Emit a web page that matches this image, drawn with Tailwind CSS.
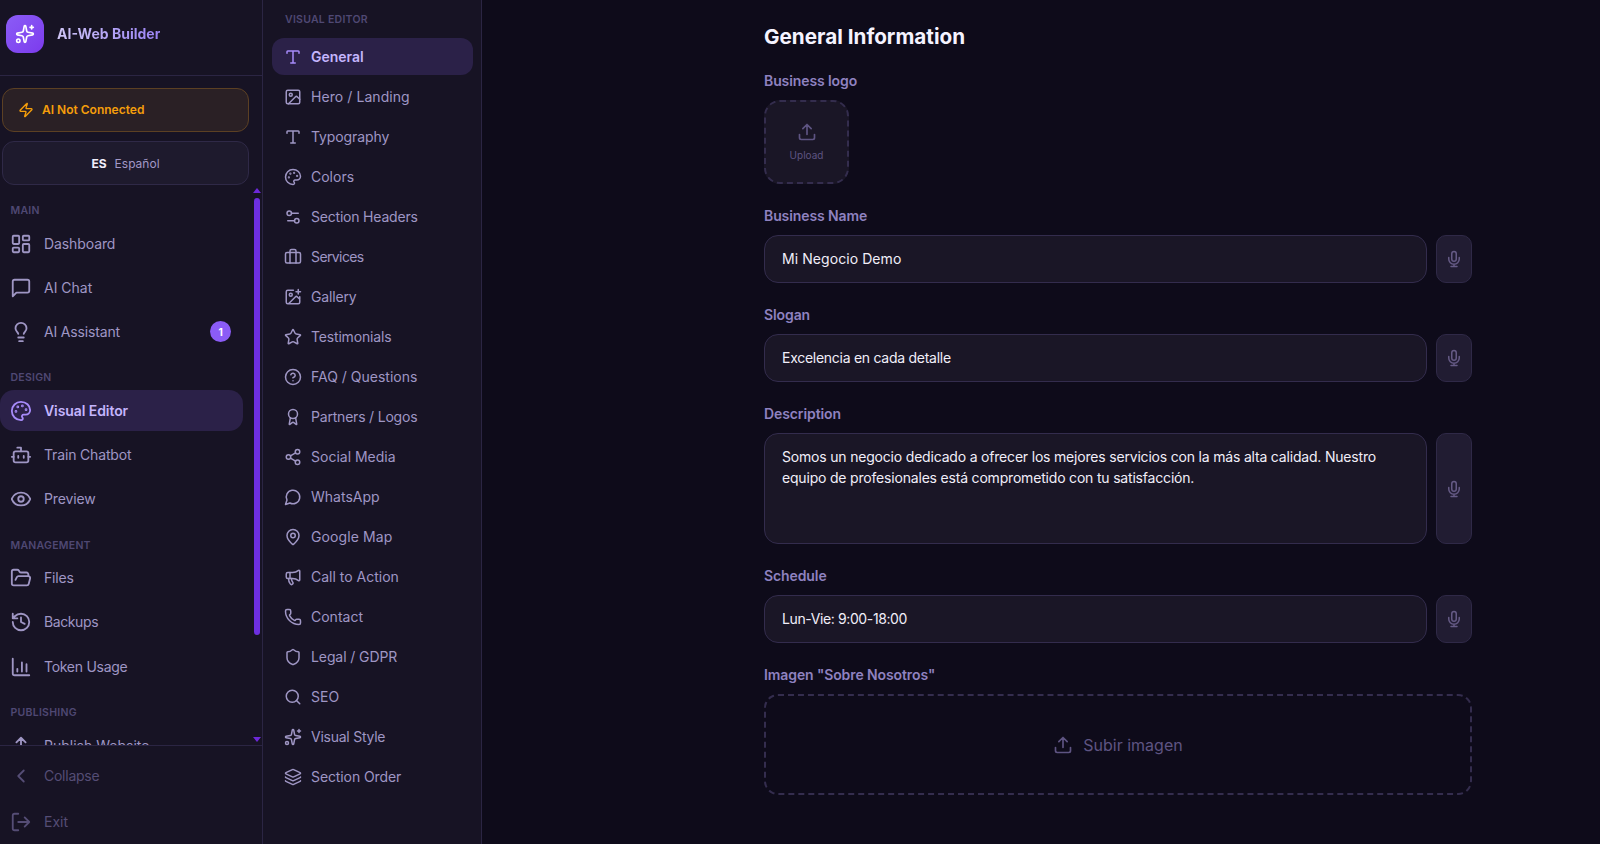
<!DOCTYPE html>
<html lang="en">
<head>
<meta charset="utf-8">
<title>AI-Web Builder</title>
<script src="https://cdn.jsdelivr.net/npm/@tailwindcss/browser@4"></script>
</head>
<body class="bg-[#0e0b1a]">
<svg class="hidden" xmlns="http://www.w3.org/2000/svg">
<symbol id="i-sparkles" viewBox="0 0 24 24"><path d="M11.017 2.814a1 1 0 0 1 1.966 0l1.051 5.558a2 2 0 0 0 1.594 1.594l5.558 1.051a1 1 0 0 1 0 1.966l-5.558 1.051a2 2 0 0 0-1.594 1.594l-1.051 5.558a1 1 0 0 1-1.966 0l-1.051-5.558a2 2 0 0 0-1.594-1.594l-5.558-1.051a1 1 0 0 1 0-1.966l5.558-1.051a2 2 0 0 0 1.594-1.594z"/><path d="M20 2v4M22 4h-4"/><circle cx="4" cy="20" r="2"/></symbol>
<symbol id="i-zap" viewBox="0 0 24 24"><path d="M4 14a1 1 0 0 1-.78-1.63l9.9-10.2a.5.5 0 0 1 .86.46l-1.92 6.02A1 1 0 0 0 13 10h7a1 1 0 0 1 .78 1.63l-9.9 10.2a.5.5 0 0 1-.86-.46l1.92-6.02A1 1 0 0 0 11 14z"/></symbol>
<symbol id="i-dash" viewBox="0 0 24 24"><rect x="3" y="3" width="7" height="9" rx="1"/><rect x="14" y="3" width="7" height="5" rx="1"/><rect x="14" y="12" width="7" height="9" rx="1"/><rect x="3" y="16" width="7" height="5" rx="1"/></symbol>
<symbol id="i-msq" viewBox="0 0 24 24"><path d="M21 15a2 2 0 0 1-2 2H7l-4 4V5a2 2 0 0 1 2-2h14a2 2 0 0 1 2 2z"/></symbol>
<symbol id="i-bulb" viewBox="0 0 24 24"><path d="M15 14c.2-1 .7-1.7 1.5-2.5 1-.9 1.5-2.2 1.5-3.5A6 6 0 0 0 6 8c0 1 .2 2.2 1.5 3.5.7.7 1.3 1.5 1.5 2.5M9 18h6M10 22h4"/></symbol>
<symbol id="i-palette" viewBox="0 0 24 24"><path d="M12 22a1 1 0 0 1 0-20 10 9 0 0 1 10 9 5 5 0 0 1-5 5h-2.25a1.75 1.75 0 0 0-1.4 2.8l.3.4a1.75 1.75 0 0 1-1.4 2.8z"/><circle cx="13.5" cy="6.5" r=".5" fill="currentColor"/><circle cx="17.5" cy="10.5" r=".5" fill="currentColor"/><circle cx="6.5" cy="12.5" r=".5" fill="currentColor"/><circle cx="8.5" cy="7.5" r=".5" fill="currentColor"/></symbol>
<symbol id="i-bot" viewBox="0 0 24 24"><path d="M12 8V4H8"/><rect x="4" y="8" width="16" height="12" rx="2"/><path d="M2 14h2M20 14h2M15 13v2M9 13v2"/></symbol>
<symbol id="i-eye" viewBox="0 0 24 24"><path d="M2.062 12.348a1 1 0 0 1 0-.696 10.75 10.75 0 0 1 19.876 0 1 1 0 0 1 0 .696 10.75 10.75 0 0 1-19.876 0"/><circle cx="12" cy="12" r="3"/></symbol>
<symbol id="i-folder" viewBox="0 0 24 24"><path d="m6 14 1.5-2.9A2 2 0 0 1 9.24 10H20a2 2 0 0 1 1.94 2.5l-1.54 6a2 2 0 0 1-1.95 1.5H4a2 2 0 0 1-2-2V5a2 2 0 0 1 2-2h3.9a2 2 0 0 1 1.69.9l.81 1.2a2 2 0 0 0 1.67.9H18a2 2 0 0 1 2 2v2"/></symbol>
<symbol id="i-history" viewBox="0 0 24 24"><path d="M3 12a9 9 0 1 0 9-9 9.75 9.75 0 0 0-6.74 2.74L3 8M3 3v5h5M12 7v5l4 2"/></symbol>
<symbol id="i-chart" viewBox="0 0 24 24"><path d="M3 3v16a2 2 0 0 0 2 2h16M8 17v-3M13 17V7M18 17V9"/></symbol>
<symbol id="i-upload" viewBox="0 0 24 24"><path d="M12 3v12M17 8l-5-5-5 5M21 15v4a2 2 0 0 1-2 2H5a2 2 0 0 1-2-2v-4"/></symbol>
<symbol id="i-left" viewBox="0 0 24 24"><path d="m15 18-6-6 6-6"/></symbol>
<symbol id="i-logout" viewBox="0 0 24 24"><path d="m16 17 5-5-5-5M21 12H9M9 21H5a2 2 0 0 1-2-2V5a2 2 0 0 1 2-2h4"/></symbol>
<symbol id="i-type" viewBox="0 0 24 24"><path d="M12 4v16M4 7V5a1 1 0 0 1 1-1h14a1 1 0 0 1 1 1v2M9 20h6"/></symbol>
<symbol id="i-image" viewBox="0 0 24 24"><rect x="3" y="3" width="18" height="18" rx="2"/><circle cx="9" cy="9" r="2"/><path d="m21 15-3.086-3.086a2 2 0 0 0-2.828 0L6 21"/></symbol>
<symbol id="i-sliders" viewBox="0 0 24 24"><path d="M14 17H5M19 7h-9"/><circle cx="17" cy="17" r="3"/><circle cx="7" cy="7" r="3"/></symbol>
<symbol id="i-case" viewBox="0 0 24 24"><path d="M16 20V4a2 2 0 0 0-2-2h-4a2 2 0 0 0-2 2v16"/><rect x="2" y="6" width="20" height="14" rx="2"/></symbol>
<symbol id="i-imgplus" viewBox="0 0 24 24"><path d="M16 5h6M19 2v6M21 11.5V19a2 2 0 0 1-2 2H5a2 2 0 0 1-2-2V5a2 2 0 0 1 2-2h7.5M21 15l-3.086-3.086a2 2 0 0 0-2.828 0L6 21"/><circle cx="9" cy="9" r="2"/></symbol>
<symbol id="i-star" viewBox="0 0 24 24"><path d="M11.525 2.295a.53.53 0 0 1 .95 0l2.31 4.679a2.123 2.123 0 0 0 1.595 1.16l5.166.756a.53.53 0 0 1 .294.904l-3.736 3.638a2.123 2.123 0 0 0-.611 1.878l.882 5.14a.53.53 0 0 1-.771.56l-4.618-2.428a2.122 2.122 0 0 0-1.973 0L6.396 21.01a.53.53 0 0 1-.77-.56l.881-5.139a2.122 2.122 0 0 0-.611-1.879L2.16 9.795a.53.53 0 0 1 .294-.906l5.165-.755a2.122 2.122 0 0 0 1.597-1.16z"/></symbol>
<symbol id="i-help" viewBox="0 0 24 24"><circle cx="12" cy="12" r="10"/><path d="M9.09 9a3 3 0 0 1 5.83 1c0 2-3 3-3 3M12 17h.01"/></symbol>
<symbol id="i-award" viewBox="0 0 24 24"><path d="m15.477 12.89 1.515 8.526a.5.5 0 0 1-.81.47l-3.58-2.687a1 1 0 0 0-1.197 0l-3.586 2.686a.5.5 0 0 1-.81-.469l1.514-8.526"/><circle cx="12" cy="8" r="6"/></symbol>
<symbol id="i-share" viewBox="0 0 24 24"><circle cx="18" cy="5" r="3"/><circle cx="6" cy="12" r="3"/><circle cx="18" cy="19" r="3"/><path d="M8.59 13.51l6.83 3.98M15.41 6.51l-6.82 3.98"/></symbol>
<symbol id="i-mcircle" viewBox="0 0 24 24"><path d="M7.9 20A9 9 0 1 0 4 16.1L2 22Z"/></symbol>
<symbol id="i-pin" viewBox="0 0 24 24"><path d="M20 10c0 4.993-5.539 10.193-7.399 11.799a1 1 0 0 1-1.202 0C9.539 20.193 4 14.993 4 10a8 8 0 0 1 16 0"/><circle cx="12" cy="10" r="3"/></symbol>
<symbol id="i-mega" viewBox="0 0 24 24"><path d="M11 6a13 13 0 0 0 8.4-2.8A1 1 0 0 1 21 4v12a1 1 0 0 1-1.6.8A13 13 0 0 0 11 14H5a2 2 0 0 1-2-2V8a2 2 0 0 1 2-2z"/><path d="M6 14a12 12 0 0 0 2.4 7.2 2 2 0 0 0 3.2-2.4A8 8 0 0 1 10 14M8 6v8"/></symbol>
<symbol id="i-phone" viewBox="0 0 24 24"><path d="M13.832 16.568a1 1 0 0 0 1.213-.303l.355-.465A2 2 0 0 1 17 15h3a2 2 0 0 1 2 2v3a2 2 0 0 1-2 2A18 18 0 0 1 2 4a2 2 0 0 1 2-2h3a2 2 0 0 1 2 2v3a2 2 0 0 1-.8 1.6l-.468.351a1 1 0 0 0-.292 1.233 14 14 0 0 0 6.392 6.384"/></symbol>
<symbol id="i-shield" viewBox="0 0 24 24"><path d="M20 13c0 5-3.5 7.5-7.66 8.95a1 1 0 0 1-.67-.01C7.5 20.5 4 18 4 13V6a1 1 0 0 1 1-1c2 0 4.5-1.2 6.24-2.72a1.17 1.17 0 0 1 1.52 0C14.51 3.81 17 5 19 5a1 1 0 0 1 1 1z"/></symbol>
<symbol id="i-search" viewBox="0 0 24 24"><path d="m21 21-4.34-4.34"/><circle cx="11" cy="11" r="8"/></symbol>
<symbol id="i-layers" viewBox="0 0 24 24"><path d="M12.83 2.18a2 2 0 0 0-1.66 0L2.6 6.08a1 1 0 0 0 0 1.83l8.58 3.91a2 2 0 0 0 1.66 0l8.58-3.9a1 1 0 0 0 0-1.83z"/><path d="M2 12a1 1 0 0 0 .58.91l8.6 3.91a2 2 0 0 0 1.65 0l8.59-3.9A1 1 0 0 0 22 12M2 17a1 1 0 0 0 .58.91l8.6 3.91a2 2 0 0 0 1.65 0l8.59-3.9A1 1 0 0 0 22 17"/></symbol>
<symbol id="i-mic" viewBox="0 0 24 24"><path d="M12 2a3 3 0 0 0-3 3v7a3 3 0 0 0 6 0V5a3 3 0 0 0-3-3Z"/><path d="M19 10v2a7 7 0 0 1-14 0v-2M12 19v3M8 22h8"/></symbol>
</svg>

<div class="flex h-[844px] w-[1600px] overflow-hidden font-['Inter',sans-serif] text-sm">

  <!-- primary sidebar -->
  <aside class="flex w-[263px] shrink-0 flex-col border-r border-[#2b2543] bg-[#171324]">
    <div class="flex h-[76px] shrink-0 items-center gap-[13px] border-b border-[#2b2543] pb-[8px] pl-[6px]">
      <div class="flex h-[38px] w-[38px] items-center justify-center rounded-xl bg-gradient-to-br from-[#8b5cf6] to-[#7c3aed] text-white">
        <svg class="h-5 w-5" fill="none" stroke="currentColor" stroke-width="2" stroke-linecap="round" stroke-linejoin="round"><use href="#i-sparkles"/></svg>
      </div>
      <span class="bg-gradient-to-r from-[#cfc5f5] to-[#9b82f5] bg-clip-text text-sm font-bold text-transparent">AI-Web Builder</span>
    </div>
    <div class="flex shrink-0 flex-col gap-[9px] pl-[2px] pr-[13px] pt-3">
      <div class="flex h-[44px] items-center gap-[8px] rounded-xl border border-[#5c4023] bg-[#2a2025] pl-[15px] text-xs font-semibold text-[#f59e0b]">
        <svg class="h-4 w-4" fill="none" stroke="currentColor" stroke-width="2" stroke-linecap="round" stroke-linejoin="round"><use href="#i-zap"/></svg>
        <span>AI Not Connected</span>
      </div>
      <div class="flex h-[44px] items-center justify-center gap-[8px] rounded-xl border border-[#2f2947] bg-[#1e1a2d] pt-[2px] text-xs">
        <span class="font-bold text-[#f1eefb]">ES</span>
        <span class="text-[#a298c6]">Español</span>
      </div>
    </div>
    <div class="flex min-h-0 flex-1">
      <nav class="min-w-0 flex-1 overflow-hidden">
        <p class="mb-1 ml-[10.5px] mt-[18px] h-4 text-[10.5px] font-semibold leading-4 tracking-wide text-[#4f4873]">MAIN</p>
        <div class="flex flex-col gap-[3.2px]">
          <a class="flex h-[41px] items-center gap-[12px] pl-[10px] tracking-[-0.1px] text-[#9f96c4]"><svg class="h-[22px] w-[22px]" fill="none" stroke="currentColor" stroke-width="2" stroke-linecap="round" stroke-linejoin="round"><use href="#i-dash"/></svg>Dashboard</a>
          <a class="flex h-[41px] items-center gap-[12px] pl-[10px] text-[#9f96c4]"><svg class="h-[22px] w-[22px]" fill="none" stroke="currentColor" stroke-width="2" stroke-linecap="round" stroke-linejoin="round"><use href="#i-msq"/></svg>AI Chat</a>
          <a class="flex h-[41px] items-center gap-[12px] pl-[10px] pr-[12px] tracking-[-0.17px] text-[#9f96c4]"><svg class="h-[22px] w-[22px]" fill="none" stroke="currentColor" stroke-width="2" stroke-linecap="round" stroke-linejoin="round"><use href="#i-bulb"/></svg><span class="flex-1">AI Assistant</span><span class="flex h-[21px] w-[21px] items-center justify-center rounded-full bg-[#8b5cf6] text-[10px] font-bold text-white">1</span></a>
        </div>
        <p class="mb-1 ml-[10.5px] mt-[18px] h-4 text-[10.5px] font-semibold leading-4 tracking-wide text-[#4f4873]">DESIGN</p>
        <div class="flex flex-col gap-[3.2px]">
          <a class="flex h-[41px] items-center gap-[12px] rounded-[14px] bg-[#2b2148] pl-[10px] font-semibold tracking-[-0.08px] text-[#c4b5fd]"><svg class="h-[22px] w-[22px] text-[#a78bfa]" fill="none" stroke="currentColor" stroke-width="2" stroke-linecap="round" stroke-linejoin="round"><use href="#i-palette"/></svg>Visual Editor</a>
          <a class="flex h-[41px] items-center gap-[12px] pl-[10px] tracking-[-0.16px] text-[#9f96c4]"><svg class="h-[22px] w-[22px]" fill="none" stroke="currentColor" stroke-width="2" stroke-linecap="round" stroke-linejoin="round"><use href="#i-bot"/></svg>Train Chatbot</a>
          <a class="flex h-[41px] items-center gap-[12px] pl-[10px] tracking-[-0.15px] text-[#9f96c4]"><svg class="h-[22px] w-[22px]" fill="none" stroke="currentColor" stroke-width="2" stroke-linecap="round" stroke-linejoin="round"><use href="#i-eye"/></svg>Preview</a>
        </div>
        <p class="mb-1 ml-[10.5px] mt-[18px] h-4 text-[10.5px] font-semibold leading-4 tracking-wide text-[#4f4873]">MANAGEMENT</p>
        <div class="flex flex-col gap-[3.2px]">
          <a class="flex h-[41px] items-center gap-[12px] pl-[10px] tracking-[-0.2px] text-[#9f96c4]"><svg class="h-[22px] w-[22px]" fill="none" stroke="currentColor" stroke-width="2" stroke-linecap="round" stroke-linejoin="round"><use href="#i-folder"/></svg>Files</a>
          <a class="flex h-[41px] items-center gap-[12px] pl-[10px] tracking-[-0.4px] text-[#9f96c4]"><svg class="h-[22px] w-[22px]" fill="none" stroke="currentColor" stroke-width="2" stroke-linecap="round" stroke-linejoin="round"><use href="#i-history"/></svg>Backups</a>
          <a class="flex h-[41px] items-center gap-[12px] pl-[10px] tracking-[-0.28px] text-[#9f96c4]"><svg class="h-[22px] w-[22px]" fill="none" stroke="currentColor" stroke-width="2" stroke-linecap="round" stroke-linejoin="round"><use href="#i-chart"/></svg>Token Usage</a>
        </div>
        <p class="mb-1 ml-[10.5px] mt-[18px] h-4 text-[10.5px] font-semibold leading-4 tracking-wide text-[#4f4873]">PUBLISHING</p>
        <a class="flex h-[41px] items-center gap-[12px] pl-[10px] text-[#9f96c4]"><svg class="h-[22px] w-[22px]" fill="none" stroke="currentColor" stroke-width="2" stroke-linecap="round" stroke-linejoin="round"><use href="#i-upload"/></svg>Publish Website</a>
      </nav>
      <div class="flex w-[19px] shrink-0 flex-col items-center pb-[3px] pl-[10.5px] pr-[2px] pt-[3px]">
        <div class="h-0 w-0 border-x-[4px] border-b-[5px] border-x-transparent border-b-[#6d28d9]"></div>
        <div class="mt-[5px] h-[437px] w-[6.5px] shrink-0 rounded-full bg-[#6d2fe0]"></div>
        <div class="mt-auto h-0 w-0 border-x-[4px] border-t-[5px] border-x-transparent border-t-[#6d28d9]"></div>
      </div>
    </div>
    <div class="flex h-[99px] shrink-0 flex-col border-t border-[#2b2543] text-[#554d75]">
      <a class="mt-[7px] flex h-[46px] items-center gap-[12px] pl-[10px] tracking-[-0.25px]"><svg class="h-[22px] w-[22px]" fill="none" stroke="currentColor" stroke-width="2" stroke-linecap="round" stroke-linejoin="round"><use href="#i-left"/></svg>Collapse</a>
      <a class="mt-[1px] flex h-[46px] items-center gap-[12px] pl-[10px]"><svg class="h-[22px] w-[22px]" fill="none" stroke="currentColor" stroke-width="2" stroke-linecap="round" stroke-linejoin="round"><use href="#i-logout"/></svg>Exit</a>
    </div>
  </aside>

  <!-- secondary sidebar -->
  <aside class="flex w-[219px] shrink-0 flex-col border-r border-[#2b2543] bg-[#171324] pl-[9px] pr-[8px]">
    <p class="ml-[13px] mt-[12px] h-4 text-[10.5px] font-semibold leading-4 tracking-wide text-[#4f4873]">VISUAL EDITOR</p>
    <div class="mt-[10px] flex flex-col gap-[3.05px]">
      <a class="flex h-[37px] items-center gap-[9.5px] rounded-xl bg-[#2b2148] pl-[11.5px] font-semibold text-[#c4b5fd]"><svg class="h-[18px] w-[18px] text-[#a78bfa]" fill="none" stroke="currentColor" stroke-width="2" stroke-linecap="round" stroke-linejoin="round"><use href="#i-type"/></svg>General</a>
      <a class="flex h-[37px] items-center gap-[9.5px] pl-[11.5px] tracking-[0.07px] text-[#9f96c4]"><svg class="h-[18px] w-[18px]" fill="none" stroke="currentColor" stroke-width="2" stroke-linecap="round" stroke-linejoin="round"><use href="#i-image"/></svg>Hero / Landing</a>
      <a class="flex h-[37px] items-center gap-[9.5px] pl-[11.5px] tracking-[-0.1px] text-[#9f96c4]"><svg class="h-[18px] w-[18px]" fill="none" stroke="currentColor" stroke-width="2" stroke-linecap="round" stroke-linejoin="round"><use href="#i-type"/></svg>Typography</a>
      <a class="flex h-[37px] items-center gap-[9.5px] pl-[11.5px] text-[#9f96c4]"><svg class="h-[18px] w-[18px]" fill="none" stroke="currentColor" stroke-width="2" stroke-linecap="round" stroke-linejoin="round"><use href="#i-palette"/></svg>Colors</a>
      <a class="flex h-[37px] items-center gap-[9.5px] pl-[11.5px] tracking-[-0.2px] text-[#9f96c4]"><svg class="h-[18px] w-[18px]" fill="none" stroke="currentColor" stroke-width="2" stroke-linecap="round" stroke-linejoin="round"><use href="#i-sliders"/></svg>Section Headers</a>
      <a class="flex h-[37px] items-center gap-[9.5px] pl-[11.5px] tracking-[-0.6px] text-[#9f96c4]"><svg class="h-[18px] w-[18px]" fill="none" stroke="currentColor" stroke-width="2" stroke-linecap="round" stroke-linejoin="round"><use href="#i-case"/></svg>Services</a>
      <a class="flex h-[37px] items-center gap-[9.5px] pl-[11.5px] tracking-[-0.15px] text-[#9f96c4]"><svg class="h-[18px] w-[18px]" fill="none" stroke="currentColor" stroke-width="2" stroke-linecap="round" stroke-linejoin="round"><use href="#i-imgplus"/></svg>Gallery</a>
      <a class="flex h-[37px] items-center gap-[9.5px] pl-[11.5px] tracking-[-0.17px] text-[#9f96c4]"><svg class="h-[18px] w-[18px]" fill="none" stroke="currentColor" stroke-width="2" stroke-linecap="round" stroke-linejoin="round"><use href="#i-star"/></svg>Testimonials</a>
      <a class="flex h-[37px] items-center gap-[9.5px] pl-[11.5px] text-[#9f96c4]"><svg class="h-[18px] w-[18px]" fill="none" stroke="currentColor" stroke-width="2" stroke-linecap="round" stroke-linejoin="round"><use href="#i-help"/></svg>FAQ / Questions</a>
      <a class="flex h-[37px] items-center gap-[9.5px] pl-[11.5px] tracking-[-0.2px] text-[#9f96c4]"><svg class="h-[18px] w-[18px]" fill="none" stroke="currentColor" stroke-width="2" stroke-linecap="round" stroke-linejoin="round"><use href="#i-award"/></svg>Partners / Logos</a>
      <a class="flex h-[37px] items-center gap-[9.5px] pl-[11.5px] text-[#9f96c4]"><svg class="h-[18px] w-[18px]" fill="none" stroke="currentColor" stroke-width="2" stroke-linecap="round" stroke-linejoin="round"><use href="#i-share"/></svg>Social Media</a>
      <a class="flex h-[37px] items-center gap-[9.5px] pl-[11.5px] text-[#9f96c4]"><svg class="h-[18px] w-[18px]" fill="none" stroke="currentColor" stroke-width="2" stroke-linecap="round" stroke-linejoin="round"><use href="#i-mcircle"/></svg>WhatsApp</a>
      <a class="flex h-[37px] items-center gap-[9.5px] pl-[11.5px] tracking-[0.1px] text-[#9f96c4]"><svg class="h-[18px] w-[18px]" fill="none" stroke="currentColor" stroke-width="2" stroke-linecap="round" stroke-linejoin="round"><use href="#i-pin"/></svg>Google Map</a>
      <a class="flex h-[37px] items-center gap-[9.5px] pl-[11.5px] text-[#9f96c4]"><svg class="h-[18px] w-[18px]" fill="none" stroke="currentColor" stroke-width="2" stroke-linecap="round" stroke-linejoin="round"><use href="#i-mega"/></svg>Call to Action</a>
      <a class="flex h-[37px] items-center gap-[9.5px] pl-[11.5px] text-[#9f96c4]"><svg class="h-[18px] w-[18px]" fill="none" stroke="currentColor" stroke-width="2" stroke-linecap="round" stroke-linejoin="round"><use href="#i-phone"/></svg>Contact</a>
      <a class="flex h-[37px] items-center gap-[9.5px] pl-[11.5px] tracking-[-0.1px] text-[#9f96c4]"><svg class="h-[18px] w-[18px]" fill="none" stroke="currentColor" stroke-width="2" stroke-linecap="round" stroke-linejoin="round"><use href="#i-shield"/></svg>Legal / GDPR</a>
      <a class="flex h-[37px] items-center gap-[9.5px] pl-[11.5px] text-[#9f96c4]"><svg class="h-[18px] w-[18px]" fill="none" stroke="currentColor" stroke-width="2" stroke-linecap="round" stroke-linejoin="round"><use href="#i-search"/></svg>SEO</a>
      <a class="flex h-[37px] items-center gap-[9.5px] pl-[11.5px] tracking-[-0.25px] text-[#9f96c4]"><svg class="h-[18px] w-[18px]" fill="none" stroke="currentColor" stroke-width="2" stroke-linecap="round" stroke-linejoin="round"><use href="#i-sparkles"/></svg>Visual Style</a>
      <a class="flex h-[37px] items-center gap-[9.5px] pl-[11.5px] tracking-[-0.1px] text-[#9f96c4]"><svg class="h-[18px] w-[18px]" fill="none" stroke="currentColor" stroke-width="2" stroke-linecap="round" stroke-linejoin="round"><use href="#i-layers"/></svg>Section Order</a>
    </div>
  </aside>

  <!-- form -->
  <main class="min-w-0 flex-1 bg-[#0e0b1a]">
    <div class="ml-[282px] w-[708px] pt-[23px]">
      <h1 class="h-[27px] text-[20.7px] font-bold leading-[27px] text-[#f5f3ff]">General Information</h1>
      <label class="mt-[21px] block h-[20px] font-semibold leading-5 tracking-[-0.1px] text-[#8f82c0]">Business logo</label>
      <div class="mt-[9px] flex h-[84px] w-[85px] flex-col items-center justify-center rounded-2xl border-2 border-dashed border-[#342d4e] bg-[#1a1626] text-[#5e5482]">
        <svg class="mb-[1px] h-5 w-5" fill="none" stroke="currentColor" stroke-width="2" stroke-linecap="round" stroke-linejoin="round"><use href="#i-upload"/></svg>
        <span class="mt-[5px] text-[10px] leading-[14px]">Upload</span>
      </div>
      <label class="mt-[22px] block h-[20px] font-semibold leading-5 tracking-[-0.1px] text-[#8f82c0]">Business Name</label>
      <div class="mt-[9px] flex h-[48px] gap-[9px]">
        <div class="flex min-w-0 flex-1 items-center rounded-[14px] border border-[#332c4d] bg-[#1a1626] pl-[17px] tracking-[0.07px] text-[#f1eef9]">Mi Negocio Demo</div>
        <button class="flex w-[36px] shrink-0 items-center justify-center rounded-[10px] border border-[#2f2947] bg-[#211c32] text-[#655a85]"><svg class="h-[18px] w-[18px]" fill="none" stroke="currentColor" stroke-width="2" stroke-linecap="round" stroke-linejoin="round"><use href="#i-mic"/></svg></button>
      </div>
      <label class="mt-[22px] block h-[20px] font-semibold leading-5 tracking-[-0.1px] text-[#8f82c0]">Slogan</label>
      <div class="mt-[9px] flex h-[48px] gap-[9px]">
        <div class="flex min-w-0 flex-1 items-center rounded-[14px] border border-[#332c4d] bg-[#1a1626] pl-[17px] tracking-[-0.27px] text-[#f1eef9]">Excelencia en cada detalle</div>
        <button class="flex w-[36px] shrink-0 items-center justify-center rounded-[10px] border border-[#2f2947] bg-[#211c32] text-[#655a85]"><svg class="h-[18px] w-[18px]" fill="none" stroke="currentColor" stroke-width="2" stroke-linecap="round" stroke-linejoin="round"><use href="#i-mic"/></svg></button>
      </div>
      <label class="mt-[22px] block h-[20px] font-semibold leading-5 tracking-[-0.1px] text-[#8f82c0]">Description</label>
      <div class="mt-[9px] flex h-[111px] gap-[9px]">
        <div class="min-w-0 flex-1 rounded-[14px] border border-[#332c4d] bg-[#1a1626] pl-[17px] pr-[17px] pt-[12px] leading-[21px] tracking-[-0.19px] text-[#f1eef9]">Somos un negocio dedicado a ofrecer los mejores servicios con la más alta calidad. Nuestro equipo de profesionales está comprometido con tu satisfacción.</div>
        <button class="flex w-[36px] shrink-0 items-center justify-center rounded-[10px] border border-[#2f2947] bg-[#211c32] text-[#655a85]"><svg class="h-[18px] w-[18px]" fill="none" stroke="currentColor" stroke-width="2" stroke-linecap="round" stroke-linejoin="round"><use href="#i-mic"/></svg></button>
      </div>
      <label class="mt-[22px] block h-[20px] font-semibold leading-5 tracking-[-0.1px] text-[#8f82c0]">Schedule</label>
      <div class="mt-[9px] flex h-[48px] gap-[9px]">
        <div class="flex min-w-0 flex-1 items-center rounded-[14px] border border-[#332c4d] bg-[#1a1626] pl-[17px] tracking-[-0.38px] text-[#f1eef9]">Lun-Vie: 9:00-18:00</div>
        <button class="flex w-[36px] shrink-0 items-center justify-center rounded-[10px] border border-[#2f2947] bg-[#211c32] text-[#655a85]"><svg class="h-[18px] w-[18px]" fill="none" stroke="currentColor" stroke-width="2" stroke-linecap="round" stroke-linejoin="round"><use href="#i-mic"/></svg></button>
      </div>
      <label class="mt-[22px] block h-[20px] font-semibold leading-5 tracking-[-0.1px] text-[#8f82c0]">Imagen "Sobre Nosotros"</label>
      <div class="mt-[9px] flex h-[101px] items-center justify-center gap-[10px] rounded-[14px] border-2 border-dashed border-[#342d4e] text-base text-[#5e5482]">
        <svg class="h-5 w-5" fill="none" stroke="currentColor" stroke-width="2" stroke-linecap="round" stroke-linejoin="round"><use href="#i-upload"/></svg>
        <span>Subir imagen</span>
      </div>
    </div>
  </main>
</div>
</body>
</html>
